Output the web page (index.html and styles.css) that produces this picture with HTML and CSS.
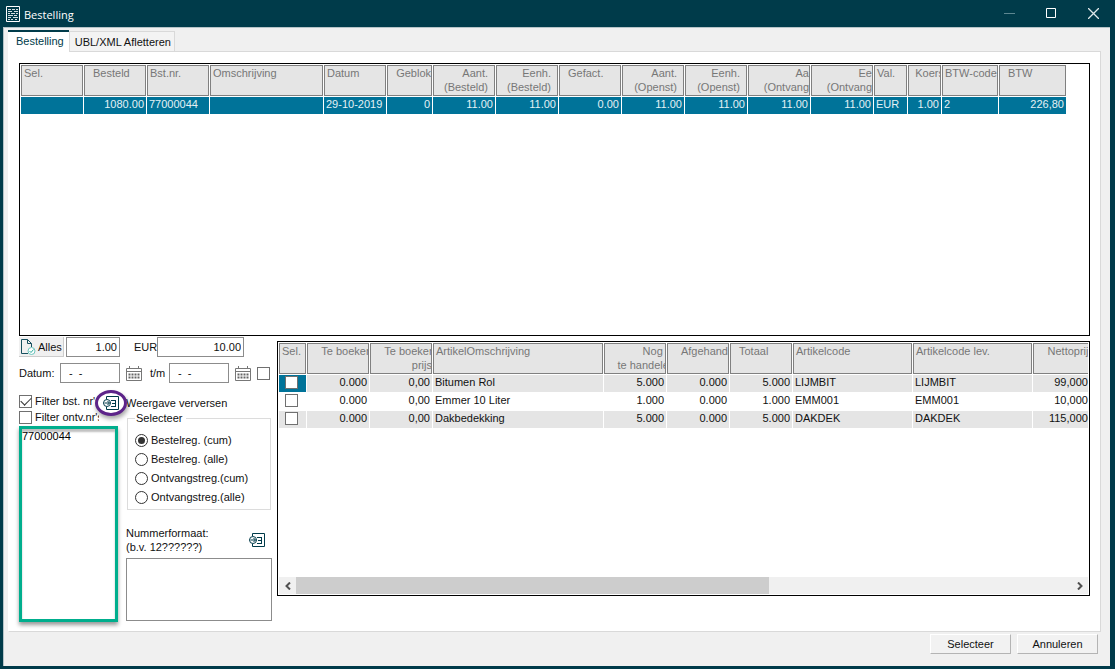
FILE: index.html
```html
<!DOCTYPE html>
<html lang="nl">
<head>
  <meta charset="UTF-8">
  <meta name="viewport" content="width=device-width, initial-scale=1.0">
  <title>Bestelling</title>
  <link rel="stylesheet" href="styles.css">
</head>
<body>
  <svg class="symbols" aria-hidden="true">
    <symbol id="calendar" viewBox="0 0 16 15">
      <path d="M0.5 2.5h15v12h-15zM0.5 5.5h15M3.5 0v3M12.5 0v3" fill="none" stroke="#777"/>
      <path d="M2.5 8.5h11M2.5 11.5h11" stroke="#666" stroke-width="2" stroke-dasharray="2 1"/>
    </symbol>
    <symbol id="refresh" viewBox="0 0 16 16">
      <path d="M3.5 4V1.500h12v13h-12V12" fill="none" stroke="#003b4a"/>
      <path d="M8 5.500h5M9 8.500h4M8 11.500h5M12.500 5v7" fill="none" stroke="#003b4a"/>
      <circle cx="4" cy="8" r="3.500" fill="#fff" stroke="#003b4a"/>
      <path d="M1.500 8h5M4.500 6l2 2-2 2" fill="none" stroke="#003b4a"/>
    </symbol>
  </svg>

  <header class="titlebar">
    <svg class="app-icon" width="14" height="16" viewBox="0 0 14 16">
      <path d="M0.5 0.500h13v15h-13z" fill="none" stroke="#fff"/>
      <path d="M2 3.500h3M6 3.500h3M10 3.500h2M2 5.500h4M8 5.500h4M2 7.500h2M5 7.500h4M10 7.500h2M2 9.500h5M8 9.500h3M2 11.500h3M7 11.500h5M2 13.500h2M5 13.500h2M9 13.500h2" stroke="#d5e0e3"/>
    </svg>
    <h1>Bestelling</h1>
    <div class="window-buttons">
      <button type="button" aria-label="Minimaliseren"><svg width="11" height="11"><path d="M0 5.500h11" stroke="#5d8791"/></svg></button>
      <button type="button" aria-label="Maximaliseren"><svg width="11" height="11"><path d="M0.500 0.500h9v9h-9z" fill="none" stroke="#fff"/></svg></button>
      <button type="button" aria-label="Sluiten"><svg width="11" height="11"><path d="M0 0l11 11M11 0L0 11" stroke="#dfe7e9" stroke-width="1.300"/></svg></button>
    </div>
  </header>

  <main class="client">
    <div class="tabs">
      <button type="button" class="tab active">Bestelling</button>
      <button type="button" class="tab">UBL/XML Afletteren</button>
    </div>

    <div class="panel">
      <div class="grid orders">
        <table>
          <colgroup>
            <col class="w-m"><col class="w-m"><col class="w-m"><col class="w-desc"><col class="w-m"><col class="w-block">
            <col class="w-m"><col class="w-m"><col class="w-m"><col class="w-m"><col class="w-m"><col class="w-m"><col class="w-m">
            <col class="w-s"><col class="w-s"><col class="w-code"><col class="w-btw">
          </colgroup>
          <thead>
            <tr>
              <th>Sel.</th>
              <th class="indent">Besteld</th>
              <th>Bst.nr.</th>
              <th>Omschrijving</th>
              <th>Datum</th>
              <th class="flush">Geblok</th>
              <th class="num">Aant.<br>(Besteld)</th>
              <th class="num">Eenh.<br>(Besteld)</th>
              <th class="indent">Gefact.</th>
              <th class="num">Aant.<br>(Openst)</th>
              <th class="num">Eenh.<br>(Openst)</th>
              <th class="flush">Aa<br>(Ontvang</th>
              <th class="flush">Ee<br>(Ontvang</th>
              <th>Val.</th>
              <th class="cut"><span class="over-s">Koers</span></th>
              <th>BTW-code</th>
              <th class="indent">BTW</th>
            </tr>
          </thead>
          <tbody>
            <tr class="selected">
              <td></td>
              <td class="num">1080.00</td>
              <td>77000044</td>
              <td></td>
              <td>29-10-2019</td>
              <td class="num">0</td>
              <td class="num">11.00</td>
              <td class="num">11.00</td>
              <td class="num">0.00</td>
              <td class="num">11.00</td>
              <td class="num">11.00</td>
              <td class="num">11.00</td>
              <td class="num">11.00</td>
              <td>EUR</td>
              <td class="num">1.00</td>
              <td>2</td>
              <td class="num">226,80</td>
            </tr>
          </tbody>
        </table>
      </div>

      <div class="lower">
        <form class="filters">
          <div class="row amounts">
            <button type="button" class="all">
              <svg width="16" height="16" viewBox="0 0 16 16">
                <path d="M8 14.500H1.500v-14h6l4 4V8M7.500 0.500v4h4" fill="none" stroke="#17505f"/>
                <circle cx="11.500" cy="12" r="3.500" fill="#fff" stroke="#6cc5bd"/>
                <path d="M9.500 12l1.500 1.500 2.500-3" fill="none" stroke="#2fae9f"/>
              </svg>
              Alles
            </button>
            <input class="amount" type="text" value="1.00" aria-label="Aantal">
            <label class="currency" for="total">EUR</label>
            <input class="amount total" id="total" type="text" value="10.00">
          </div>

          <div class="row dates">
            <label class="from" for="from">Datum:</label>
            <input class="date" id="from" type="text" value="-  -">
            <svg class="cal" width="16" height="15"><use href="#calendar"/></svg>
            <label class="until" for="until">t/m</label>
            <input class="date" id="until" type="text" value="-  -">
            <svg class="cal" width="16" height="15"><use href="#calendar"/></svg>
            <input class="check" type="checkbox" aria-label="Datumfilter">
          </div>

          <div class="columns">
            <div class="left">
              <label class="filter"><input class="check" type="checkbox" checked><span>Filter bst. nr's</span></label>
              <label class="filter"><input class="check" type="checkbox"><span>Filter ontv.nr's</span></label>
              <select class="numbers" size="10" aria-label="Bestelnummers">
                <option>77000044</option>
              </select>
            </div>

            <div class="right">
              <div class="refresh">
                <button type="button" class="marked" aria-label="Verversen"><svg width="16" height="16"><use href="#refresh"/></svg></button>
                Weergave verversen
              </div>
              <fieldset>
                <legend>Selecteer</legend>
                <label><input type="radio" name="kind" checked>Bestelreg. (cum)</label>
                <label><input type="radio" name="kind">Bestelreg. (alle)</label>
                <label><input type="radio" name="kind">Ontvangstreg.(cum)</label>
                <label><input type="radio" name="kind">Ontvangstreg.(alle)</label>
              </fieldset>
              <div class="format">
                <label for="format">Nummerformaat:<br>(b.v. 12??????)</label>
                <button type="button" class="icon-button" aria-label="Toepassen"><svg width="16" height="16"><use href="#refresh"/></svg></button>
              </div>
              <textarea id="format"></textarea>
            </div>
          </div>
        </form>

        <div class="grid lines">
          <div class="scroller">
            <table>
              <colgroup>
                <col class="w-sel"><col class="w-m"><col class="w-m"><col class="w-article"><col class="w-m">
                <col class="w-m"><col class="w-m"><col class="w-artcode"><col class="w-artcode"><col class="w-m">
              </colgroup>
              <thead>
                <tr>
                  <th>Sel.</th>
                  <th class="cut"><span class="over-s">Te boeken</span></th>
                  <th class="cut"><span class="over-s">Te boeken<br>prijs&nbsp;</span></th>
                  <th>ArtikelOmschrijving</th>
                  <th class="cut"><span class="over-m">Nog&nbsp;&nbsp;&nbsp;&nbsp;<br>te handelen</span></th>
                  <th class="flush">Afgehand</th>
                  <th class="indent">Totaal</th>
                  <th>Artikelcode</th>
                  <th>Artikelcode lev.</th>
                  <th class="flush">Nettoprijs</th>
                </tr>
              </thead>
              <tbody>
                <tr>
                  <td class="tick current"><input class="check" type="checkbox" aria-label="Bitumen Rol"></td>
                  <td class="num">0.000</td>
                  <td class="num">0,00</td>
                  <td>Bitumen Rol</td>
                  <td class="num">5.000</td>
                  <td class="num">0.000</td>
                  <td class="num">5.000</td>
                  <td>LIJMBIT</td>
                  <td>LIJMBIT</td>
                  <td class="num price">99,0000</td>
                </tr>
                <tr>
                  <td class="tick"><input class="check" type="checkbox" aria-label="Emmer 10 Liter"></td>
                  <td class="num">0.000</td>
                  <td class="num">0,00</td>
                  <td>Emmer 10 Liter</td>
                  <td class="num">1.000</td>
                  <td class="num">0.000</td>
                  <td class="num">1.000</td>
                  <td>EMM001</td>
                  <td>EMM001</td>
                  <td class="num price">10,0000</td>
                </tr>
                <tr>
                  <td class="tick"><input class="check" type="checkbox" aria-label="Dakbedekking"></td>
                  <td class="num">0.000</td>
                  <td class="num">0,00</td>
                  <td>Dakbedekking</td>
                  <td class="num">5.000</td>
                  <td class="num">0.000</td>
                  <td class="num">5.000</td>
                  <td>DAKDEK</td>
                  <td>DAKDEK</td>
                  <td class="num price">115,0000</td>
                </tr>
              </tbody>
            </table>
          </div>
          <div class="scrollbar">
            <button type="button" aria-label="Naar links"><svg width="8" height="8"><path d="M6 0.500L2.500 4L6 7.500" fill="none" stroke="#505050" stroke-width="2"/></svg></button>
            <div class="track"><div class="thumb"></div></div>
            <button type="button" aria-label="Naar rechts"><svg width="8" height="8"><path d="M2 0.500L5.500 4L2 7.500" fill="none" stroke="#505050" stroke-width="2"/></svg></button>
          </div>
        </div>
      </div>
    </div>

    <footer class="actions">
      <button type="button">Selecteer</button>
      <button type="button">Annuleren</button>
    </footer>
  </main>
</body>
</html>
```
FILE: styles.css
```css
* {
  box-sizing: border-box;
}
body {
  margin: 0;
  height: 100vh;
  display: flex;
  flex-direction: column;
  padding: 0 5px 3px 3px;
  background: #003b4a;
  color: #111;
  font-family: "Liberation Sans", Arial, sans-serif;
  font-size: 11px;
  line-height: 14px;
}
button, input, select, textarea {
  font: inherit;
  color: inherit;
  margin: 0;
  padding: 0;
  border-radius: 0;
}
button {
  border: 0;
  background: none;
}
svg {
  display: block;
  flex: none;
}
.symbols {
  position: absolute;
  width: 0;
  height: 0;
}

/* title bar */
.titlebar {
  display: flex;
  align-items: center;
  height: 27px;
  padding-left: 3px;
  gap: 4px;
  color: #fff;
}
.titlebar h1 {
  flex: 1;
  margin: 0;
  padding-top: 2px;
  font: 11px/16px "Open Sans", "Noto Sans", sans-serif;
}
.window-buttons {
  display: flex;
  gap: 20px;
  padding-right: 6px;
}
.window-buttons button {
  display: flex;
  justify-content: center;
  width: 22px;
}

/* tabs */
.client {
  flex: 1;
  display: flex;
  flex-direction: column;
  min-height: 0;
  padding: 2px 9px 0 4px;
  background: #f0f0f0;
  border-top: 1px solid #b5c4c8;
  border-left: 1px solid #b5c4c8;
}
.tabs {
  display: flex;
  align-items: flex-end;
}
.tab {
  height: 20px;
  padding: 0 3px 0 5px;
  border: 1px solid #d9d9d9;
  border-bottom: 0;
  background: #f3f3f3;
}
.tab.active {
  position: relative;
  height: 22px;
  margin-bottom: -1px;
  padding: 0 5px 2px 8px;
  border: 0;
  border-top: 2px solid #003b4a;
  background: #fff;
  color: #003b4a;
}
.panel {
  flex: 1;
  display: flex;
  flex-direction: column;
  min-height: 0;
  padding: 11px 10px 9px 10px;
  background: #fff;
  border: 1px solid #d9d9d9;
  border-left-color: #fff;
}

/* grids */
.grid {
  border: 1px solid #000;
  background: #fff;
  overflow: hidden;
}
.orders {
  flex: 1;
  min-height: 60px;
}
.grid table {
  width: 1px;
  table-layout: fixed;
  border-spacing: 1px;
}
.w-sel { width: 27px; }
.w-s { width: 33px; }
.w-block { width: 45px; }
.w-code { width: 56px; }
.w-m { width: 62px; }
.w-btw { width: 67px; }
.w-desc { width: 113px; }
.w-artcode { width: 119px; }
.w-article { width: 170px; }
.grid th {
  height: 31px;
  padding: 0 2px;
  border: 1px solid #808080;
  background: #e5e5e5;
  color: #777;
  font-weight: normal;
  text-align: left;
  vertical-align: top;
  white-space: nowrap;
  overflow: hidden;
}
.grid th.indent {
  padding-left: 8px;
}
.grid th.num {
  padding-right: 6px;
}
.grid th.flush {
  padding-right: 0;
  text-align: right;
}
.grid th.cut {
  padding: 0;
}
.cut span {
  display: block;
  text-align: right;
}
.over-s { margin-right: -4px; }
.over-m { margin-right: -10px; }
.grid td {
  height: 17px;
  padding: 0 2px 2px;
  white-space: nowrap;
  overflow: hidden;
  line-height: 13px;
}
.grid .num {
  text-align: right;
}
.grid td.price {
  padding-right: 1px;
}
.selected td {
  background: #007399;
  color: #e4f1f5;
}
.lines tbody tr:nth-child(odd) td {
  background: #e5e5e5;
}
.lines tbody td.tick {
  padding: 0 0 2px 6px;
}
.lines tbody tr td.current {
  background: #007399;
}

/* tick boxes and radios */
.check, input[type="radio"] {
  appearance: none;
  flex: none;
  display: grid;
  place-items: center;
  width: 13px;
  height: 13px;
  border: 1px solid #707070;
  background: #fff;
}
.check:checked::before {
  content: "";
  width: 9px;
  height: 5px;
  margin-top: -3px;
  border: solid #333;
  border-width: 0 0 1px 1px;
  transform: rotate(-45deg);
}
input[type="radio"] {
  border-color: #333;
  border-radius: 50%;
}
input[type="radio"]:checked::before {
  content: "";
  width: 7px;
  height: 7px;
  border-radius: 50%;
  background: #333;
}

/* lower half */
.lower {
  display: flex;
  gap: 5px;
  height: 286px;
}
.filters {
  display: flex;
  flex-direction: column;
  width: 253px;
  flex: none;
}
.row {
  display: flex;
  align-items: center;
}
.amounts {
  gap: 2px;
  padding-top: 1px;
}
.all {
  display: flex;
  align-items: center;
  gap: 2px;
  width: 45px;
  height: 20px;
  padding-left: 1px;
  background: #f0f0f0;
  border: solid #ccc;
  border-width: 0 1px 1px 0;
}
.amount, .date {
  height: 20px;
  border: 1px solid #8c8c8c;
  background: #fff;
}
.amount {
  width: 54px;
  padding-right: 2px;
  text-align: right;
}
.total {
  width: 87px;
}
.currency {
  width: 33px;
  padding-left: 12px;
}
.dates {
  padding-top: 6px;
}
.from {
  width: 41px;
}
.date {
  width: 60px;
  padding-left: 8px;
}
.cal {
  margin: 0 6px;
}
.until {
  width: 21px;
  padding-left: 2px;
}
.columns {
  flex: 1;
  display: flex;
  gap: 8px;
  min-height: 0;
  padding-top: 10px;
}
.left {
  display: flex;
  flex-direction: column;
  width: 99px;
}
.filter {
  display: flex;
  align-items: center;
  gap: 3px;
  width: 80px;
  height: 16px;
  overflow: hidden;
  white-space: nowrap;
}
.numbers {
  appearance: none;
  flex: 1;
  margin: 1px 0 0;
  padding-top: 1px;
  border: 3px solid #00ae8d;
  background: #fff;
  color: #000;
  overflow: hidden;
  box-shadow: 0 3px 4px rgba(0, 0, 0, 0.4), inset 0 3px 2px rgba(0, 0, 0, 0.25);
}
.numbers option {
  padding: 0;
  min-height: 14px;
}
.right {
  flex: 1;
  display: flex;
  flex-direction: column;
}
.refresh {
  position: relative;
  padding-top: 3px;
  height: 18px;
}
.marked {
  position: absolute;
  left: -31px;
  top: -3px;
  display: grid;
  place-items: center;
  width: 32px;
  height: 26px;
  border: 3px solid #5c2389;
  border-radius: 50%;
  background: #fff;
  box-shadow: 1px 3px 4px rgba(0, 0, 0, 0.35);
}
fieldset {
  display: flex;
  flex-direction: column;
  gap: 5px;
  margin: 0 1px;
  padding: 8px 7px 5px;
  border: 1px solid #dcdcdc;
}
legend {
  padding: 0 4px 0 1px;
}
fieldset label {
  display: flex;
  align-items: center;
  gap: 3px;
  height: 14px;
}
.format {
  display: flex;
  align-items: center;
  justify-content: space-between;
  padding: 16px 7px 4px 0;
}
textarea {
  flex: 1;
  min-height: 0;
  margin-bottom: 1px;
  border: 1px solid #8c8c8c;
  background: #fff;
  resize: none;
}
.lines {
  flex: 1;
  min-width: 0;
  display: flex;
  flex-direction: column;
  margin: 5px 0 26px;
}
.scroller {
  flex: 1;
  margin-right: 1px;
  overflow: hidden;
}
.scrollbar {
  display: flex;
  height: 17px;
  margin: 0 1px 1px;
  background: #f0f0f0;
}
.scrollbar button {
  display: grid;
  place-items: center;
  width: 17px;
}
.track {
  flex: 1;
}
.thumb {
  width: 61%;
  height: 100%;
  background: #cdcdcd;
}

/* dialog buttons */
.actions {
  display: flex;
  justify-content: flex-end;
  gap: 6px;
  height: 34px;
  padding: 2px 3px 0 0;
}
.actions button {
  width: 81px;
  height: 20px;
  background: #f2f2f2;
  border: 1px solid #fff;
  border-right-color: #b4b4b4;
  border-bottom-color: #b4b4b4;
}
```
